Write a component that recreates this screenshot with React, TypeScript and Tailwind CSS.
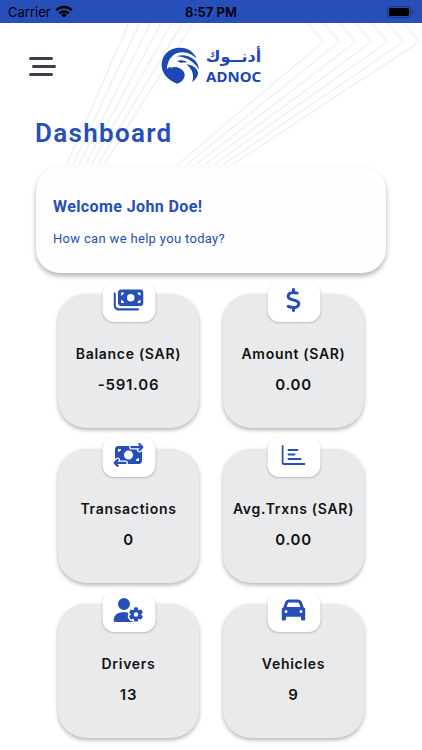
import type { ReactNode } from "react"
import { FaCar, FaDollarSign, FaMoneyBills, FaMoneyBillTransfer, FaUserGear } from "react-icons/fa6"

type Stat = {
  label: string
  value: string
  icon: ReactNode
}

function ChartIcon() {
  return (
    <svg viewBox="0 0 24 20" className="w-6 h-5" fill="none" stroke="currentColor" strokeWidth="2" strokeLinecap="round" strokeLinejoin="round">
      <path d="M1 1v16.5a1.5 1.5 0 0 0 1.5 1.5H23" />
      <path d="M7 5h9M7 9.5h6M7 14h12" />
    </svg>
  )
}

const stats: Stat[] = [
  { label: "Balance (SAR)", value: "-591.06", icon: <FaMoneyBills className="size-[30px]" /> },
  { label: "Amount (SAR)", value: "0.00", icon: <FaDollarSign className="size-6" /> },
  { label: "Transactions", value: "0", icon: <FaMoneyBillTransfer className="size-[30px]" /> },
  { label: "Avg.Trxns (SAR)", value: "0.00", icon: <ChartIcon /> },
  { label: "Drivers", value: "13", icon: <FaUserGear className="size-[30px]" /> },
  { label: "Vehicles", value: "9", icon: <FaCar className="size-6" /> },
]

function StatusBar() {
  return (
    <div className="relative grid grid-cols-3 items-center h-[23px] px-2 bg-[#264fb9] text-black font-['Inter',sans-serif] text-[13px] leading-5">
      <div className="flex items-center gap-1">
        <span>Carrier</span>
        <svg viewBox="0 0 18 13" className="w-[18px] h-[13px]" fill="none" stroke="currentColor" strokeWidth="2.5">
          <path d="M1.2 5.2a11 11 0 0 1 15.6 0" />
          <path d="M4.2 8.4a6.8 6.8 0 0 1 9.6 0" />
          <path d="M9 12.6 6.2 9.9a4 4 0 0 1 5.6 0Z" fill="currentColor" stroke="none" />
        </svg>
      </div>
      <span className="text-center font-semibold">8:57 PM</span>
      <svg viewBox="0 0 27 12" className="w-[27px] h-3 justify-self-end">
        <rect x="0.5" y="0.5" width="23" height="11" rx="3" fill="none" stroke="#1b3472" />
        <rect x="2" y="2" width="20" height="8" rx="1.5" fill="#000" />
        <path d="M25 4v4q1.5-.5 1.5-2t-1.5-2Z" fill="#1b3472" />
      </svg>
    </div>
  )
}

function Backdrop() {
  return (
    <svg viewBox="0 0 422 141" className="absolute inset-x-0 top-0 w-full -z-10" fill="none" stroke="#f1f1f2" strokeWidth="1.5">
      {[0, 1, 2, 3, 4, 5, 6].map((i) => (
        <g key={i}>
          <path d={`M${129 + i * 10.7} 0L${67 + i * 6.2} 141`} />
          <path d={`M${308 + i * 16} 0L${323 + i * 16} 19L${178 + i * 9.2} 141`} />
        </g>
      ))}
    </svg>
  )
}

function Logo() {
  return (
    <div className="flex items-center gap-[6px] text-[#1d47b5]">
      <svg viewBox="9 8 116 110" className="w-[39px] h-[38px]" fill="currentColor">
        <path d="M57 116C30 104 11 86 11 60C11 30 34 9 66 9C90 9 106 21 115 41C101 28 88 22 73 22C48 22 29 38 26 73C30 67 35 65 40 68C47 65 60 66 67 71C77 76 81 85 79 95C76 105 69 112 57 116Z" />
        <path d="M56 34C82 24 120 40 122 74C110 54 90 36 56 34Z" />
        <path d="M56 48C64 44 76 45 86 50C82 53 78 53 74 52C72 55 66 55 64 51Z" />
        <path d="M84 58C108 60 120 74 119 87C117 97 110 105 102 111C108 92 104 74 84 58Z" />
      </svg>
      <div className="flex flex-col items-end">
        <span dir="rtl" lang="ar" className="font-['DejaVu_Sans',sans-serif] font-bold text-base leading-5">أدنــوك</span>
        <span className="font-['Noto_Sans',sans-serif] font-bold text-[15px] leading-[18px]">ADNOC</span>
      </div>
    </div>
  )
}

function StatCard({ label, value, icon }: Stat) {
  return (
    <div className="relative flex flex-col items-center h-[134px] pt-[50px] rounded-[28px] bg-[#e9eaec] shadow-[0_2px_4px_rgba(0,0,0,0.3)]">
      <div className="absolute -top-3 left-1/2 -translate-x-1/2 flex items-center justify-center w-[53px] h-10 pb-1 rounded-xl bg-white text-[#264fb9] shadow-[0_1px_2px_rgba(0,0,0,0.2)]">
        {icon}
      </div>
      <p className="text-sm leading-5 font-semibold tracking-wider whitespace-nowrap">{label}</p>
      <p className="mt-[11px] text-[15px] leading-5 font-semibold tracking-wider">{value}</p>
    </div>
  )
}

export default function App() {
  return (
    <div className="min-h-screen bg-white text-[#121212] font-['Inter',sans-serif]">
      <StatusBar />

      <div className="relative isolate">
        <Backdrop />

        <header className="grid grid-cols-[1fr_auto_1fr] items-center px-[29px] pt-6">
          <button aria-label="Open menu" className="flex flex-col gap-[5px] w-[27px]">
            <span className="w-6 h-[3px] rounded-full bg-[#453a4c]" />
            <span className="w-6 h-[3px] rounded-full bg-[#453a4c] self-end" />
            <span className="w-6 h-[3px] rounded-full bg-[#453a4c]" />
          </button>
          <Logo />
        </header>

        <main className="px-[35px] pb-3">
          <h1 className="mt-8 font-['Roboto',sans-serif] text-[26px] leading-8 font-semibold tracking-wider text-[#264fb9]">Dashboard</h1>

          <section className="mt-[18px] mx-px px-[17px] pt-[30px] pb-6 rounded-[24px] bg-[#fefefe] shadow-[0_3px_5px_rgba(0,0,0,0.3)] font-['Roboto',sans-serif] text-[#264fb9]">
            <h2 className="text-base leading-5 font-bold tracking-wide">Welcome John Doe!</h2>
            <p className="mt-3 text-[13px] leading-5 tracking-wide">How can we help you today?</p>
          </section>

          <section className="grid grid-cols-2 gap-x-6 gap-y-[21px] mt-[21px] px-[23px]">
            {stats.map((stat) => (
              <StatCard key={stat.label} {...stat} />
            ))}
          </section>
        </main>
      </div>
    </div>
  )
}
